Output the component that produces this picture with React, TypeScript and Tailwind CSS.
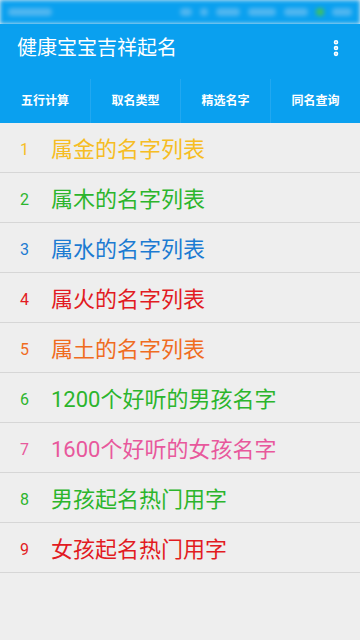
import { EllipsisVertical } from "lucide-react";

const items = [
  { n: 1, label: "属金的名字列表", color: "text-[#f6bd23]" },
  { n: 2, label: "属木的名字列表", color: "text-[#2cb52c]" },
  { n: 3, label: "属水的名字列表", color: "text-[#1c7bd2]" },
  { n: 4, label: "属火的名字列表", color: "text-[#e21b22]" },
  { n: 5, label: "属土的名字列表", color: "text-[#f06c1f]" },
  { n: 6, label: "1200个好听的男孩名字", color: "text-[#2cb52c]" },
  { n: 7, label: "1600个好听的女孩名字", color: "text-[#e8589c]" },
  { n: 8, label: "男孩起名热门用字", color: "text-[#2cb52c]" },
  { n: 9, label: "女孩起名热门用字", color: "text-[#e21b22]" },
];

const tabs = ["五行计算", "取名类型", "精选名字", "同名查询"];

export default function App() {
  return (
    <div
      className="w-[360px] h-[640px] bg-[#eeeeee] overflow-hidden"
      style={{ fontFamily: 'Roboto, "Noto Sans CJK SC", sans-serif' }}
    >
      {/* Status bar (blurred) */}
      <div className="h-6 bg-[#0aa0ef] flex items-center px-2 blur-[2px]">
        <div className="w-11 h-2 rounded bg-[#4fb6f0]" />
        <div className="flex-1" />
        <div className="flex items-center gap-2">
          <div className="w-3 h-2 rounded bg-[#4fb6f0]" />
          <div className="w-2 h-2 rounded bg-[#4fb6f0]" />
          <div className="w-6 h-2 rounded bg-[#4fb6f0]" />
          <div className="w-7 h-2 rounded bg-[#4fb6f0]" />
          <div className="w-6 h-2 rounded bg-[#4fb6f0]" />
          <div className="w-2 h-2 rounded-full bg-[#3fc060]" />
          <div className="w-5 h-2 rounded bg-[#4fb6f0]" />
        </div>
      </div>

      {/* Toolbar */}
      <div className="h-12 bg-[#0aa0ef] flex items-center pl-[17px] pr-[14px]">
        <h1 className="flex-1 text-white text-[20px] leading-none">健康宝宝吉祥起名</h1>
        <EllipsisVertical className="w-5 h-5 text-white" strokeWidth={3.5} />
      </div>

      {/* Tabs */}
      <div className="h-[51px] bg-[#0aa0ef] grid grid-cols-4">
        {tabs.map((t, i) => (
          <div key={t} className="flex items-center">
            {i > 0 && <div className="w-px h-[44px] mt-[7px] bg-[#22a8f0]" />}
            <span className="flex-1 pt-[6px] text-center text-white text-[12px] font-bold">{t}</span>
          </div>
        ))}
      </div>

      {/* List */}
      <ul>
        {items.map((it) => (
          <li
            key={it.n}
            className={`h-[50px] pt-[4px] flex items-center border-b border-[#d6d6d6] ${it.color}`}
          >
            <span className="w-[51px] pl-5 text-[16px]">{it.n}</span>
            <span className="text-[22px]">{it.label}</span>
          </li>
        ))}
      </ul>
    </div>
  );
}
